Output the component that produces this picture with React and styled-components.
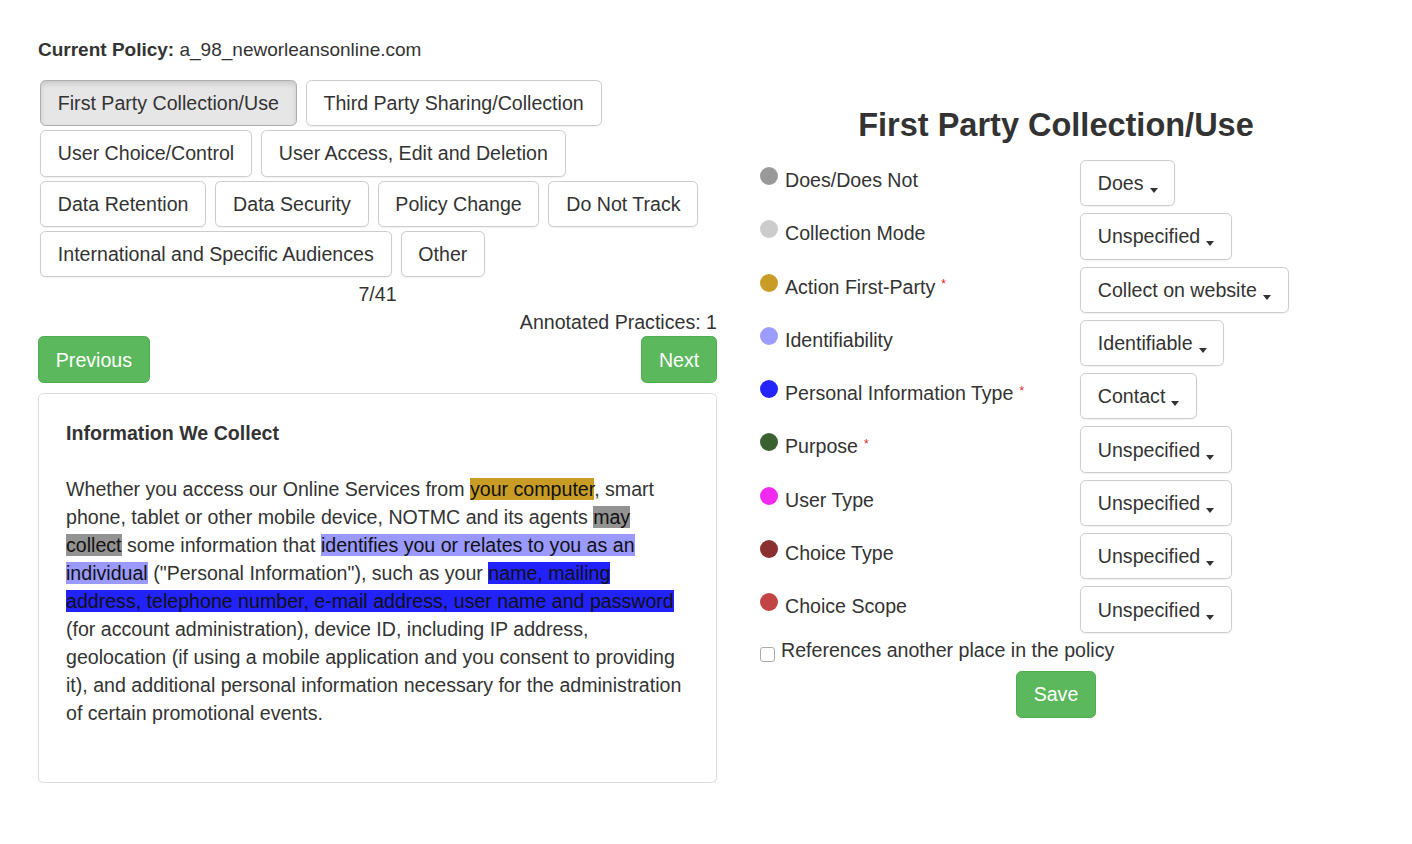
import React from "react";
import styled, { createGlobalStyle } from "styled-components";

const Global = createGlobalStyle`
  html, body { margin: 0; padding: 0; background: #fff; }
  body {
    font-family: "Liberation Sans", Arial, Helvetica, sans-serif;
    font-size: 19.6px;
    line-height: 28px;
    color: #333;
  }
  * { box-sizing: border-box; }
`;

const Page = styled.div`
  display: flex;
  align-items: flex-start;
  padding: 36px 0 0 38px;
  gap: 41px;
`;

const LeftCol = styled.div`
  width: 679px;
  display: flex;
  flex-direction: column;
`;

const PolicyLine = styled.div`
  line-height: 28px;
  font-size: 19px;
`;

const PolicyLabel = styled.span`
  font-weight: bold;
`;

const TabGroup = styled.div`
  display: flex;
  flex-wrap: wrap;
  column-gap: 9px;
  row-gap: 4px;
  margin: 16px 0 0 2px;
`;

const Btn = styled.button`
  font-family: inherit;
  font-size: 19.6px;
  line-height: 28px;
  padding: 8px 16.8px;
  height: 46.3px;
  border-radius: 5.6px;
  border: 1px solid ${(p) => (p.$active ? "#adadad" : "#ccc")};
  background: ${(p) => (p.$active ? "#e6e6e6" : "#fff")};
  color: #333;
  white-space: nowrap;
  cursor: pointer;
  box-shadow: ${(p) =>
    p.$active ? "inset 0 3px 5px rgba(0,0,0,0.125)" : "0 1px 2px rgba(0,0,0,0.06)"};
`;

const GreenBtn = styled.button`
  font-family: inherit;
  font-size: 19.6px;
  line-height: 28px;
  padding: 8.4px 16.8px;
  height: 47px;
  border-radius: 5.6px;
  border: 1px solid #4cae4c;
  background: #5cb85c;
  color: #fff;
  cursor: pointer;
`;

const Counter = styled.div`
  text-align: center;
  margin-top: 3px;
  line-height: 28px;
`;

const Annotated = styled.div`
  text-align: right;
  line-height: 28px;
`;

const NavRow = styled.div`
  display: flex;
  justify-content: space-between;
`;

const Panel = styled.div`
  margin-top: 10px;
  border: 1px solid #ddd;
  border-radius: 5.6px;
  box-shadow: 0 1px 2px rgba(0, 0, 0, 0.06);
  padding: 25px 10px 55px 27px;
`;

const PanelTitle = styled.h4`
  margin: 0;
  font-size: 19.6px;
  line-height: 28px;
  font-weight: bold;
`;

const Para = styled.p`
  margin: 28px 0 0;
  line-height: 28px;
  white-space: nowrap;
`;

const Mark = styled.span`
  background: ${(p) => p.$bg};
  color: #111;
`;

const RightCol = styled.div`
  width: 596px;
  padding-top: 71px;
  display: flex;
  flex-direction: column;
`;

const Title = styled.h3`
  margin: 0 0 17px;
  text-align: center;
  font-size: 32.5px;
  line-height: 36px;
  font-weight: bold;
  color: #333;
`;

const Fields = styled.div`
  display: grid;
  grid-template-columns: 322px auto;
  row-gap: 7px;
`;

const FieldLabel = styled.div`
  display: flex;
  align-items: flex-start;
  padding: 6px 0 0 2px;
  line-height: 28px;
`;

const Dot = styled.span`
  width: 18px;
  height: 18px;
  border-radius: 50%;
  background: ${(p) => p.$color};
  margin: 1px 7px 0 0;
  flex: none;
`;

const Req = styled.sup`
  color: #e41b1b;
  font-size: 12px;
  line-height: 0;
  margin-left: 6px;
  position: relative;
  top: 2px;
`;

const DropCell = styled.div`
  display: flex;
`;

const Caret = styled.span`
  display: inline-block;
  width: 0;
  height: 0;
  margin-left: 6px;
  vertical-align: -3px;
  border-top: 5px solid #333;
  border-left: 4.5px solid transparent;
  border-right: 4.5px solid transparent;
`;

const CheckRow = styled.label`
  display: flex;
  align-items: flex-start;
  margin-top: 3px;
  line-height: 28px;
  padding-left: 2px;
`;

const Check = styled.input`
  appearance: none;
  width: 15px;
  height: 15px;
  margin: 11px 6px 0 0;
  border: 1px solid #aaa;
  border-radius: 3px;
  background: #fff;
  flex: none;
`;

const SaveRow = styled.div`
  display: flex;
  justify-content: center;
  margin-top: 7px;
`;

const tabs = [
  "First Party Collection/Use",
  "Third Party Sharing/Collection",
  "User Choice/Control",
  "User Access, Edit and Deletion",
  "Data Retention",
  "Data Security",
  "Policy Change",
  "Do Not Track",
  "International and Specific Audiences",
  "Other",
];

const fields = [
  { label: "Does/Does Not", color: "#999999", value: "Does" },
  { label: "Collection Mode", color: "#cccccc", value: "Unspecified" },
  { label: "Action First-Party", color: "#c99d25", value: "Collect on website", req: true },
  { label: "Identifiability", color: "#9c9cff", value: "Identifiable" },
  { label: "Personal Information Type", color: "#2424ff", value: "Contact", req: true },
  { label: "Purpose", color: "#3b6131", value: "Unspecified", req: true },
  { label: "User Type", color: "#f02af0", value: "Unspecified" },
  { label: "Choice Type", color: "#8a3030", value: "Unspecified" },
  { label: "Choice Scope", color: "#c24444", value: "Unspecified" },
];

export default function App() {
  return (
    <>
      <Global />
      <Page>
        <LeftCol>
          <PolicyLine>
            <PolicyLabel>Current Policy:</PolicyLabel> a_98_neworleansonline.com
          </PolicyLine>
          <TabGroup>
            {tabs.map((t, i) => (
              <Btn key={t} $active={i === 0}>
                {t}
              </Btn>
            ))}
          </TabGroup>
          <Counter>7/41</Counter>
          <Annotated>Annotated Practices: 1</Annotated>
          <NavRow>
            <GreenBtn>Previous</GreenBtn>
            <GreenBtn>Next</GreenBtn>
          </NavRow>
          <Panel>
            <PanelTitle>Information We Collect</PanelTitle>
            <Para>
              Whether you access our Online Services from{" "}
              <Mark $bg="#c99d25">your computer</Mark>, smart
              <br />
              phone, tablet or other mobile device, NOTMC and its agents{" "}
              <Mark $bg="#939393">
                may
                <br />
                collect
              </Mark>{" "}
              some information that{" "}
              <Mark $bg="#9999ff">
                identifies you or relates to you as an
                <br />
                individual
              </Mark>{" "}
              ("Personal Information"), such as your{" "}
              <Mark $bg="#2222ff">
                name, mailing
                <br />
                address, telephone number, e-mail address, user name and password
              </Mark>
              <br />
              (for account administration), device ID, including IP address,
              <br />
              geolocation (if using a mobile application and you consent to providing
              <br />
              it), and additional personal information necessary for the administration
              <br />
              of certain promotional events.
            </Para>
          </Panel>
        </LeftCol>
        <RightCol>
          <Title>First Party Collection/Use</Title>
          <Fields>
            {fields.map((f) => (
              <React.Fragment key={f.label}>
                <FieldLabel>
                  <Dot $color={f.color} />
                  <span>
                    {f.label}
                    {f.req && <Req>*</Req>}
                  </span>
                </FieldLabel>
                <DropCell>
                  <Btn>
                    {f.value}
                    <Caret />
                  </Btn>
                </DropCell>
              </React.Fragment>
            ))}
          </Fields>
          <CheckRow>
            <Check type="checkbox" />
            References another place in the policy
          </CheckRow>
          <SaveRow>
            <GreenBtn>Save</GreenBtn>
          </SaveRow>
        </RightCol>
      </Page>
    </>
  );
}
